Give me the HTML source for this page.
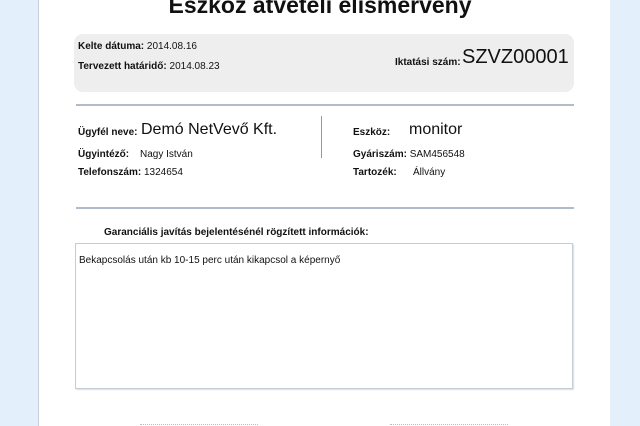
<!DOCTYPE html>
<html><head><meta charset="utf-8"><style>
body{margin:0;width:640px;height:426px;overflow:hidden;background:#e3effb;font-family:"Liberation Sans",sans-serif;position:relative}
.page{position:absolute;left:38px;top:0;width:571px;height:426px;background:#fff;border-left:1px solid #c8d0da}
.a{position:absolute;white-space:nowrap;color:#111}
b{font-weight:bold}
</style></head><body>
<div class="page"></div>
<div class="a" style="left:0;width:640px;text-align:center;top:-8px;font-size:23px;font-weight:bold">Eszköz átvételi elismervény</div>
<div class="a" style="left:74px;top:34px;width:500px;height:58px;background:#eeeeee;border-radius:9px"></div>
<div class="a" style="left:78px;top:41px;font-size:10px"><b>Kelte dátuma:</b> 2014.08.16</div>
<div class="a" style="left:78px;top:61px;font-size:10px"><b>Tervezett határidő:</b> 2014.08.23</div>
<div class="a" style="left:395px;top:57px;font-size:10px"><b>Iktatási szám:</b></div>
<div class="a" style="left:462px;top:46px;font-size:20px">SZVZ00001</div>
<div class="a" style="left:76px;top:104px;width:498px;height:2px;background:#aebccb"></div>
<div class="a" style="left:321px;top:116px;width:1px;height:42px;background:#999"></div>
<div class="a" style="left:76px;top:207px;width:498px;height:2px;background:#aebccb"></div>
<div class="a" style="left:78px;top:127px;font-size:10px"><b>Ügyfél neve:</b></div>
<div class="a" style="left:141px;top:121px;font-size:16px">Demó NetVevő Kft.</div>
<div class="a" style="left:78px;top:149px;font-size:10px"><b>Ügyintéző:</b></div>
<div class="a" style="left:140px;top:149px;font-size:10px">Nagy István</div>
<div class="a" style="left:78px;top:167px;font-size:10px"><b>Telefonszám:</b> 1324654</div>
<div class="a" style="left:353px;top:127px;font-size:10px"><b>Eszköz:</b></div>
<div class="a" style="left:409px;top:121px;font-size:16px">monitor</div>
<div class="a" style="left:353px;top:149px;font-size:10px"><b>Gyáriszám:</b> SAM456548</div>
<div class="a" style="left:353px;top:167px;font-size:10px"><b>Tartozék:</b></div>
<div class="a" style="left:413px;top:167px;font-size:10px">Állvány</div>
<div class="a" style="left:104px;top:227px;font-size:10px;font-weight:bold">Garanciális javítás bejelentésénél rögzített információk:</div>
<div class="a" style="left:75px;top:243px;width:496px;height:144px;border:1px solid #c6ccd3;box-shadow:1px 1px 1px #d8dee5"></div>
<div class="a" style="left:79px;top:255px;font-size:10px">Bekapcsolás után kb 10-15 perc után kikapcsol a képernyő</div>
<div class="a" style="left:140px;top:424px;width:118px;border-top:1px dotted #bbb"></div>
<div class="a" style="left:390px;top:424px;width:118px;border-top:1px dotted #bbb"></div>
</body></html>
